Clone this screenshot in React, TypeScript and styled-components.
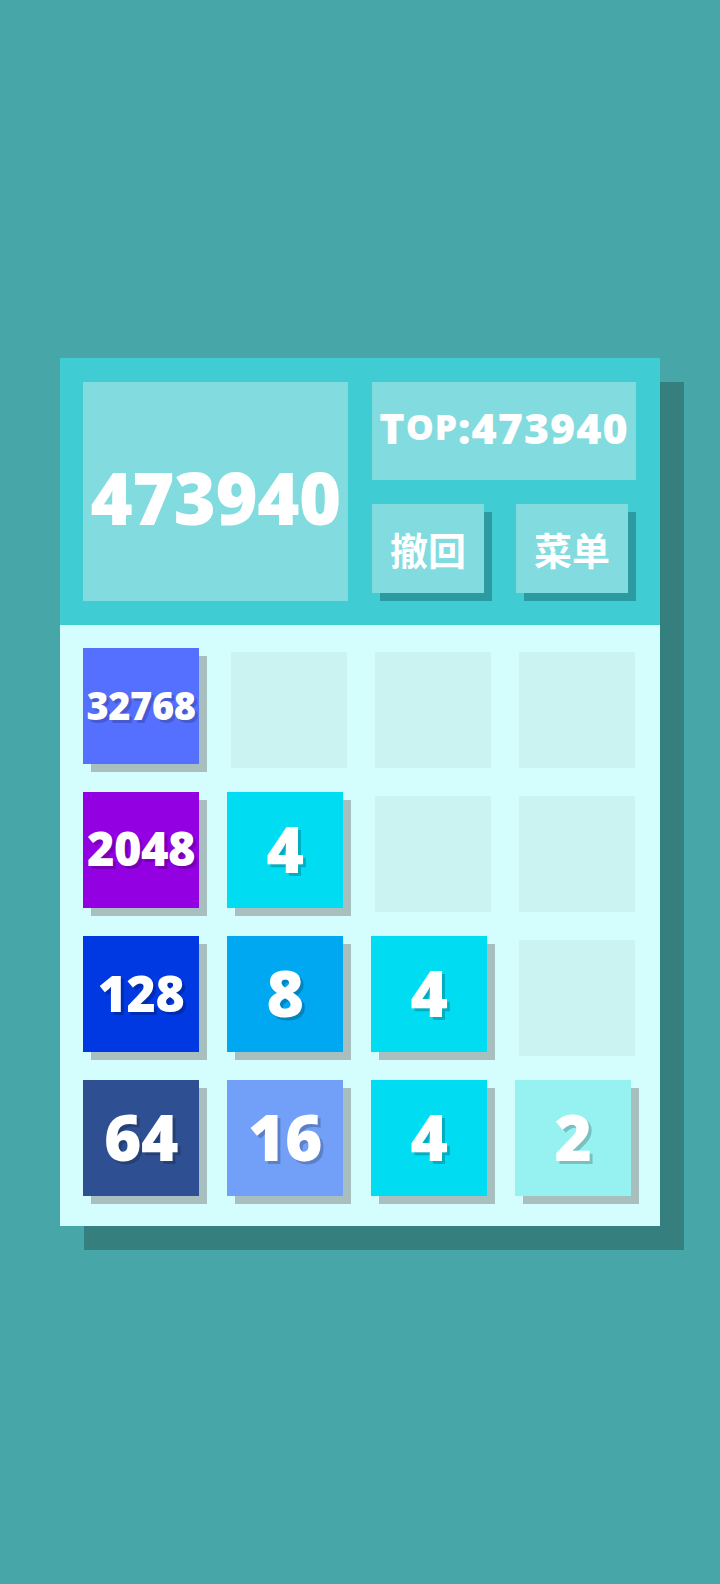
import React from "react";
import styled, { createGlobalStyle } from "styled-components";

const GlobalStyle = createGlobalStyle`
  html, body {
    margin: 0;
    padding: 0;
    background: #47a7a8;
  }
  body {
    font-family: "Open Sans", "Noto Sans CJK SC", sans-serif;
    min-height: 1584px;
  }
`;

const TILE_COLORS: Record<number, string> = {
  2: "#96f2f1",
  4: "#00ddf2",
  8: "#00a7f1",
  16: "#72a0f9",
  32: "#4a7ae8",
  64: "#2e5093",
  128: "#0038e1",
  256: "#3b2fd0",
  512: "#6c1fd8",
  1024: "#8110dc",
  2048: "#9300e1",
  4096: "#3f5cf0",
  8192: "#4a66f6",
  16384: "#506bfb",
  32768: "#5570ff",
};

const fontSizeFor = (value: number) => {
  const digits = String(value).length;
  if (digits <= 2) return 64;
  if (digits === 3) return 50;
  if (digits === 4) return 47;
  return 38;
};

const board: number[][] = [
  [32768, 0, 0, 0],
  [2048, 4, 0, 0],
  [128, 8, 4, 0],
  [64, 16, 4, 2],
];

const Page = styled.div`
  padding: 358px 0 0 60px;
`;

const Panel = styled.div`
  width: 600px;
  box-shadow: 24px 24px 0 #367f7f;
  background: #d4fefd;
`;

const Header = styled.div`
  display: flex;
  gap: 24px;
  padding: 24px 24px 24px 23px;
  background: #40ccd3;
`;

const ScoreBox = styled.div`
  width: 265px;
  height: 219px;
  box-sizing: border-box;
  padding-top: 10px;
  background: #82dbde;
  display: flex;
  align-items: center;
  justify-content: center;
  color: #ffffff;
  font-family: "Open Sans", sans-serif;
  font-weight: 800;
  font-size: 72px;
  letter-spacing: -0.5px;
  line-height: 1;
`;

const SideColumn = styled.div`
  width: 264px;
  display: flex;
  flex-direction: column;
  gap: 24px;
`;

const BestBox = styled.div`
  height: 98px;
  box-sizing: border-box;
  padding-bottom: 8px;
  background: #82dbde;
  display: flex;
  align-items: center;
  justify-content: center;
  color: #ffffff;
  font-family: "Open Sans", sans-serif;
  font-weight: 800;
  font-size: 43px;
  letter-spacing: 1px;
  line-height: 1;
  white-space: nowrap;
`;

const SmallCaps = styled.span`
  font-size: 0.82em;
  text-transform: uppercase;
`;

const ButtonRow = styled.div`
  display: flex;
  gap: 32px;
`;

const ActionButton = styled.button`
  width: 112px;
  height: 89px;
  border: 0;
  padding: 0;
  background: #82dbde;
  box-shadow: 8px 8px 0 #2b9aa1;
  color: #ffffff;
  font-family: "Noto Sans CJK SC", sans-serif;
  font-weight: 700;
  font-size: 38px;
  line-height: 1;
  display: flex;
  align-items: center;
  justify-content: center;
  cursor: pointer;
`;

const Grid = styled.div`
  display: grid;
  grid-template-columns: repeat(4, 144px);
  grid-auto-rows: 144px;
  padding: 13px 11px 12px 13px;
`;

const Slot = styled.div`
  display: flex;
`;

const EmptyCell = styled.div`
  width: 116px;
  height: 116px;
  margin: 14px;
  background: #caf3f2;
`;

const Tile = styled.div<{ $bg: string; $size: number }>`
  width: 116px;
  height: 116px;
  box-sizing: border-box;
  padding-bottom: 3px;
  margin: 10px 18px 18px 10px;
  background: ${(p) => p.$bg};
  box-shadow: 8px 8px 0 #a8bfbf;
  display: flex;
  align-items: center;
  justify-content: center;
  color: #ffffff;
  font-family: "Open Sans", sans-serif;
  font-weight: 800;
  font-size: ${(p) => p.$size}px;
  letter-spacing: -0.5px;
  line-height: 1;
  text-shadow: 3px 3px 0 rgba(0, 0, 0, 0.2);
`;

export default function App() {
  return (
    <>
      <GlobalStyle />
      <Page>
        <Panel>
          <Header>
            <ScoreBox>473940</ScoreBox>
            <SideColumn>
              <BestBox>
                T<SmallCaps>op</SmallCaps>:473940
              </BestBox>
              <ButtonRow>
                <ActionButton>撤回</ActionButton>
                <ActionButton>菜单</ActionButton>
              </ButtonRow>
            </SideColumn>
          </Header>
          <Grid>
            {board.flat().map((value, i) => (
              <Slot key={i}>
                {value ? (
                  <Tile $bg={TILE_COLORS[value] ?? "#5570ff"} $size={fontSizeFor(value)}>
                    {value}
                  </Tile>
                ) : (
                  <EmptyCell />
                )}
              </Slot>
            ))}
          </Grid>
        </Panel>
      </Page>
    </>
  );
}
